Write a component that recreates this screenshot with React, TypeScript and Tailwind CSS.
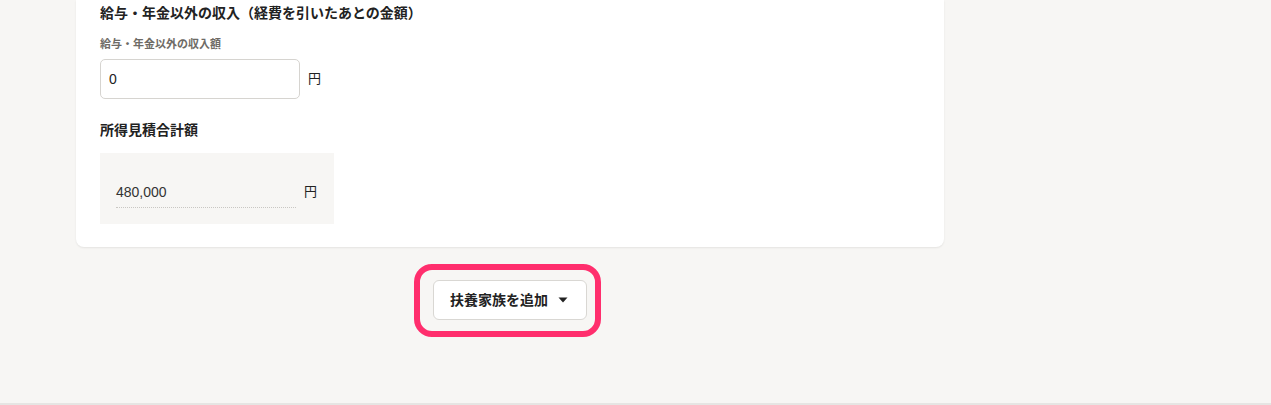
import React from "react";

export default function App() {
  return (
    <div
      className="w-[1271px] h-[405px] bg-[#f7f6f4] flex flex-col overflow-hidden text-[#222222]"
      style={{ fontFamily: '"Liberation Sans", "Noto Sans CJK JP", sans-serif' }}
    >
      <div className="flex-1 flex flex-col">
        {/* Card */}
        <div className="ml-[76px] w-[868px] bg-white rounded-b-[8px] shadow-[0_1px_2px_rgba(0,0,0,0.08)] px-[24px] pt-[3px] pb-[23px] flex flex-col">
          <h3 className="text-[14px] leading-[20px] font-bold">
            給与・年金以外の収入（経費を引いたあとの金額）
          </h3>
          <label className="mt-[13px] text-[11px] leading-[16px] font-bold text-[#6e6b66]">
            給与・年金以外の収入額
          </label>
          <div className="mt-[7px] flex items-center gap-[8px]">
            <div className="w-[200px] h-[40px] border border-[#d6d4d0] rounded-[5px] flex items-center pl-[8px] text-[14px]">
              0
            </div>
            <span className="text-[13px]">円</span>
          </div>
          <h3 className="mt-[21px] text-[14px] leading-[20px] font-bold">所得見積合計額</h3>
          <div className="mt-[13px] w-[234px] h-[71px] bg-[#f7f6f4] flex items-start pt-[24px] pl-[16px] pr-[16px]">
            <div className="w-[180px] h-[31px] border-b border-dotted border-[#c9c7c3] flex items-center text-[14px] text-[#333]">
              480,000
            </div>
            <span className="ml-[8px] h-[30px] flex items-center text-[13px]">円</span>
          </div>
        </div>

        {/* Add button with highlight ring */}
        <div className="mt-[17px] ml-[76px] w-[868px] pl-[338px]">
          <div className="inline-flex border-[6px] border-[#ff2e6d] rounded-[18px] pl-[13px] pr-[8px] pt-[10px] pb-[11px]">
            <button className="w-[154px] h-[40px] bg-white border border-[#d9d7d3] rounded-[6px] flex items-center pl-[16px] gap-[9px]">
              <span className="text-[14px] font-bold text-[#222]">扶養家族を追加</span>
              <svg width="10" height="6" viewBox="0 0 10 6" className="ml-[1px]">
                <path d="M0.5 0.5 L9.5 0.5 L5 5.5 Z" fill="#222" />
              </svg>
            </button>
          </div>
        </div>
      </div>
      <div className="h-[2px] bg-[#e6e5e3]" />
    </div>
  );
}
